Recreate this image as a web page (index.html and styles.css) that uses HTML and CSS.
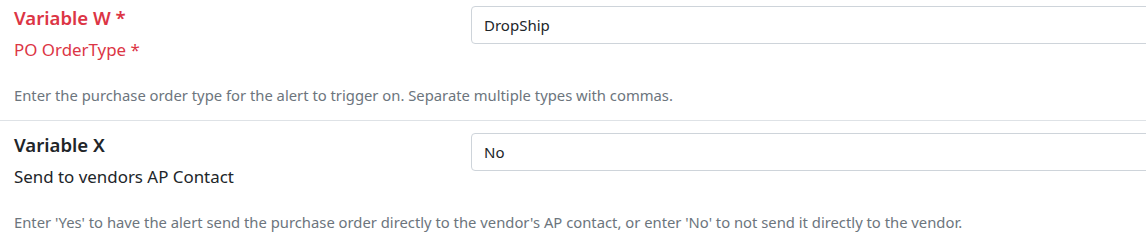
FILE: index.html
```html
<!DOCTYPE html>
<html lang="en">
<head>
  <meta charset="UTF-8">
  <title>Alert variables</title>
  <link rel="stylesheet" href="styles.css">
</head>
<body>
  <div class="var-list">
    <!-- Variable W -->
    <div class="var-row">
      <div class="var-main">
        <div class="var-label">
          <div class="var-name required">Variable W *</div>
          <div class="var-title required">PO OrderType *</div>
        </div>
        <div class="var-field">
          <input class="form-input" type="text" value="DropShip">
        </div>
      </div>
      <div class="var-help">Enter the purchase order type for the alert to trigger on. Separate multiple types with commas.</div>
    </div>

    <!-- Variable X -->
    <div class="var-row">
      <div class="var-main">
        <div class="var-label">
          <div class="var-name">Variable X</div>
          <div class="var-title">Send to vendors AP Contact</div>
        </div>
        <div class="var-field">
          <input class="form-input" type="text" value="No">
        </div>
      </div>
      <div class="var-help">Enter 'Yes' to have the alert send the purchase order directly to the vendor's AP contact, or enter 'No' to not send it directly to the vendor.</div>
    </div>
  </div>
</body>
</html>
```

FILE: styles.css
```css
body {
  margin: 0;
  font-family: 'Noto Sans', sans-serif;
  color: #212529;
  background: #fff;
  overflow: hidden;
}
.var-list {
  width: 1180px;
}
.var-row {
  padding: 6px 0 0 14px;
  border-bottom: 1px solid #dee2e6;
  height: 114px;
}
.var-row + .var-row {
  padding-top: 12px;
}
.var-main {
  display: grid;
  grid-template-columns: 457px 1fr;
}
.var-name {
  font-size: 18.6px;
  font-weight: 600;
  line-height: 24px;
}
.var-title {
  font-size: 16.9px;
  line-height: 24px;
  margin-top: 8px;
}
.required {
  color: #dc3545;
}
.form-input {
  display: block;
  box-sizing: border-box;
  width: 100%;
  height: 38px;
  padding: 6px 12px;
  border: 1px solid #ced4da;
  border-radius: 4px;
  font-family: inherit;
  font-size: 15px;
  color: #212529;
}
.var-help {
  margin-top: 23px;
  font-size: 14.8px;
  color: #6c757d;
}
```
